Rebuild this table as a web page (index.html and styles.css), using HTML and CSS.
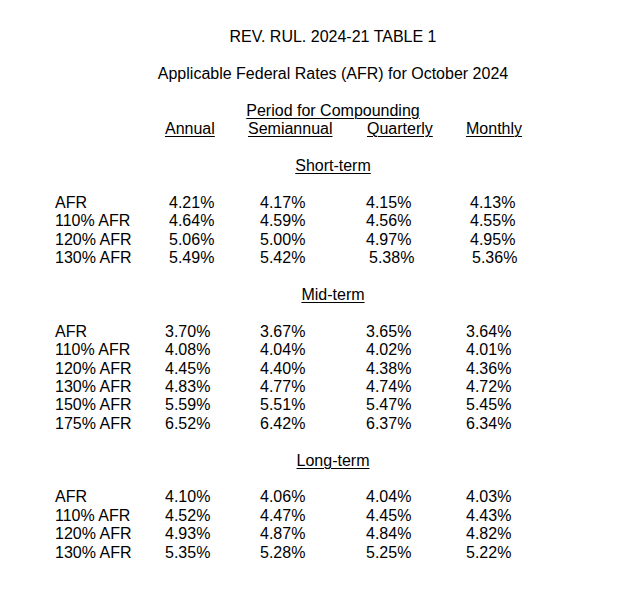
FILE: index.html
```html
<!DOCTYPE html>
<html>
<head>
<meta charset="utf-8">
<link rel="stylesheet" href="styles.css">
</head>
<body>
<div class="page">
  <p class="center line">REV. RUL. 2024-21 TABLE 1</p>
  <p class="center line gap">Applicable Federal Rates (AFR) for October 2024</p>
  <p class="center line gap period"><u>Period for Compounding</u></p>
  <div class="hdr line">
    <span></span><u>Annual</u><u>Semiannual</u><u>Quarterly</u><u>Monthly</u>
  </div>

  <p class="center line gap"><u>Short-term</u></p>
  <div class="rows gap short">
    <span>AFR</span><span>4.21%</span><span>4.17%</span><span>4.15%</span><span>4.13%</span>
    <span>110% AFR</span><span>4.64%</span><span>4.59%</span><span>4.56%</span><span>4.55%</span>
    <span>120% AFR</span><span>5.06%</span><span>5.00%</span><span>4.97%</span><span>4.95%</span>
    <span>130% AFR</span><span>5.49%</span><span>5.42%</span><span class="nudge">5.38%</span><span class="nudge">5.36%</span>
  </div>

  <p class="center line gap"><u>Mid-term</u></p>
  <div class="rows gap">
    <span>AFR</span><span>3.70%</span><span>3.67%</span><span>3.65%</span><span>3.64%</span>
    <span>110% AFR</span><span>4.08%</span><span>4.04%</span><span>4.02%</span><span>4.01%</span>
    <span>120% AFR</span><span>4.45%</span><span>4.40%</span><span>4.38%</span><span>4.36%</span>
    <span>130% AFR</span><span>4.83%</span><span>4.77%</span><span>4.74%</span><span>4.72%</span>
    <span>150% AFR</span><span>5.59%</span><span>5.51%</span><span>5.47%</span><span>5.45%</span>
    <span>175% AFR</span><span>6.52%</span><span>6.42%</span><span>6.37%</span><span>6.34%</span>
  </div>

  <p class="center line gap"><u>Long-term</u></p>
  <div class="rows gap">
    <span>AFR</span><span>4.10%</span><span>4.06%</span><span>4.04%</span><span>4.03%</span>
    <span>110% AFR</span><span>4.52%</span><span>4.47%</span><span>4.45%</span><span>4.43%</span>
    <span>120% AFR</span><span>4.93%</span><span>4.87%</span><span>4.84%</span><span>4.82%</span>
    <span>130% AFR</span><span>5.35%</span><span>5.28%</span><span>5.25%</span><span>5.22%</span>
  </div>
</div>
</body>
</html>
```

FILE: styles.css
```css
html, body {
  margin: 0;
  padding: 0;
  background: #fff;
}
body {
  font-family: "Liberation Sans", Arial, sans-serif;
  font-size: 16px;
  line-height: 18.42px;
  color: #000;
}
.page {
  width: 556px;
  margin-left: 55px;
  padding-top: 28px;
}
p { margin: 0; }
.center { text-align: center; }
.gap { margin-top: 18.42px; }
u {
  text-decoration: underline;
  text-decoration-thickness: 1px;
  text-underline-offset: 2px;
}
.hdr {
  display: grid;
  grid-template-columns: 110px 83px 119px 99px 1fr;
}
.rows {
  display: grid;
  grid-template-columns: 110px 95px 106px 100px 1fr;
}
.short span:nth-child(5n+2) { padding-left: 4px; }
.short span:nth-child(5n) { padding-left: 4px; }
.short .nudge { padding-left: 3px; }
.short span.nudge:nth-child(5n) { padding-left: 6px; }
```
